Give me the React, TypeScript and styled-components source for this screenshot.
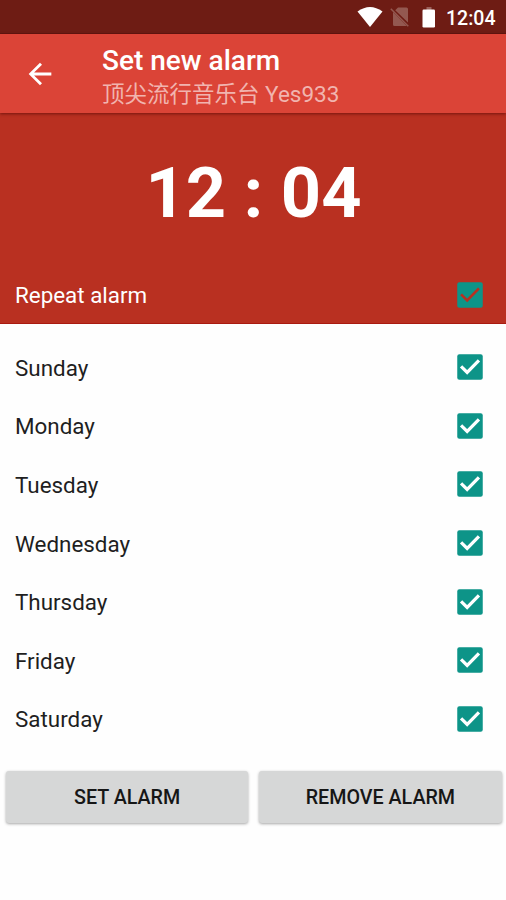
import React, { useState } from "react";
import styled, { createGlobalStyle } from "styled-components";

const GlobalStyle = createGlobalStyle`
  * { box-sizing: border-box; }
  body {
    margin: 0;
    background: #fefefe;
    font-family: Roboto, "Noto Sans CJK SC", sans-serif;
  }
`;

const Screen = styled.div`
  width: 506px;
  height: 900px;
  display: flex;
  flex-direction: column;
  overflow: hidden;
`;

const StatusBar = styled.div`
  flex: none;
  height: 34px;
  display: flex;
  align-items: center;
  justify-content: flex-end;
  padding-right: 10px;
  background: #6e1c14;
  border-bottom: 1px solid #611610;
  color: #fff;
`;

const Clock = styled.span`
  width: 50px;
  margin-left: 10px;
  padding-top: 3px;
  font-size: 19.5px;
  line-height: 23px;
  font-weight: 500;
  white-space: nowrap;
`;

const StatusIcon = styled.svg<{ $gap?: number }>`
  display: block;
  flex: none;
  margin-right: ${(p) => p.$gap ?? 0}px;
`;

const Toolbar = styled.header`
  flex: none;
  height: 79px;
  display: flex;
  align-items: center;
  padding-left: 23px;
  background: #db4437;
  box-shadow: 0 1px 3px rgba(70, 0, 0, 0.6);
  z-index: 1;
`;

const BackButton = styled.button`
  width: 34px;
  height: 34px;
  padding: 0;
  margin-right: 45px;
  border: 0;
  background: none;
  color: #fff;

  svg { display: block; }
`;

const Titles = styled.div`
  display: flex;
  flex-direction: column;
  padding-top: 7px;
  white-space: nowrap;
`;

const Title = styled.h1`
  margin: 0;
  color: #fff;
  font-size: 28px;
  line-height: 33px;
  font-weight: 500;
`;

const Subtitle = styled.div`
  color: #f1b4af;
  font-size: 22.5px;
  line-height: 34px;
`;

const TimePanel = styled.section`
  flex: none;
  height: 211px;
  display: flex;
  flex-direction: column;
  background: #b93021;
  color: #fff;
  border-bottom: 1px solid #a91a10;
`;

const Time = styled.div`
  height: 153px;
  padding-left: 1px;
  text-align: center;
  font-size: 70.3px;
  line-height: 160px;
  font-weight: 700;
  white-space: pre;
`;

const Row = styled.label`
  flex: none;
  height: 58.6px;
  display: flex;
  align-items: center;
  justify-content: space-between;
  padding: 0 19px 0 15px;
`;

const RowText = styled.span<{ $lift?: boolean }>`
  padding-top: ${(p) => (p.$lift ? 0 : 2)}px;
  font-size: 22.4px;
  line-height: 27px;
`;

const HiddenInput = styled.input`
  appearance: none;
  width: 0;
  height: 0;
  margin: 0;
`;

const CheckSlot = styled.span`
  display: flex;
`;

const Days = styled.main`
  flex: none;
  display: flex;
  flex-direction: column;
  padding-top: 14px;
  color: #1f1f1f;
`;

const Actions = styled.footer`
  display: flex;
  gap: 11px;
  padding: 22.8px 4.5px 0 6px;
`;

const Action = styled.button`
  flex: 1;
  height: 52px;
  padding: 1px 0 0;
  border: 0;
  border-radius: 3px;
  background: #d6d7d7;
  box-shadow: 0 1px 3px rgba(0, 0, 0, 0.35);
  color: #161616;
  font-family: inherit;
  font-size: 19.7px;
  font-weight: 500;
`;

function CheckBox({ label, mark, thin }: { label: string; mark: string; thin?: boolean }) {
  const [checked, setChecked] = useState(true);
  return (
    <CheckSlot>
      <HiddenInput
        type="checkbox"
        aria-label={label}
        checked={checked}
        onChange={() => setChecked(!checked)}
      />
      <svg width="34" height="34" viewBox="0 0 24 24">
        <rect x="3" y="3" width="18" height="18" rx="1.5" fill={checked ? "#0d9488" : "#757575"} />
        {checked && (
          <path
            d="M5.7 11.5l4.3 4.3 8.3-8.5"
            fill="none"
            stroke={mark}
            strokeWidth={thin ? 1.8 : 2.3}
          />
        )}
      </svg>
    </CheckSlot>
  );
}

const days = ["Sunday", "Monday", "Tuesday", "Wednesday", "Thursday", "Friday", "Saturday"];

export default function App() {
  return (
    <>
      <GlobalStyle />
      <Screen>
        <StatusBar>
          <StatusIcon $gap={7} width="26" height="20" viewBox="0 0 26 20">
            <path d="M0.5 4.5Q13-4.5 25.5 4.5L13 20Z" fill="#fff" />
          </StatusIcon>
          <StatusIcon $gap={12} width="20" height="20" viewBox="0 0 20 20">
            <path
              d="M8 .5h8.5Q18 .5 18 2v13.5L5.2 3.2ZM3 5L16.8 19H4.5Q3 19 3 17.5Z"
              fill="#935850"
            />
            <path d="M.8 1.8L18.3 19.2" stroke="#935850" strokeWidth="1.5" />
          </StatusIcon>
          <StatusIcon width="14" height="22" viewBox="0 0 14 22">
            <path d="M4.5 1h5v3h-5z" fill="#9b605a" />
            <rect x=".5" y="3.5" width="12.5" height="18" rx="1.2" fill="#fff" />
          </StatusIcon>
          <Clock>12:04</Clock>
        </StatusBar>
        <Toolbar>
          <BackButton aria-label="Back">
            <svg width="34" height="34" viewBox="0 0 24 24">
              <path
                d="M20 11H7.83l5.59-5.59L12 4l-8 8 8 8 1.41-1.41L7.83 13H20v-2z"
                fill="currentColor"
              />
            </svg>
          </BackButton>
          <Titles>
            <Title>Set new alarm</Title>
            <Subtitle>顶尖流行音乐台 Yes933</Subtitle>
          </Titles>
        </Toolbar>
        <TimePanel>
          <Time>12 : 04</Time>
          <Row>
            <RowText $lift>Repeat alarm</RowText>
            <CheckBox label="Repeat alarm" mark="#b93021" thin />
          </Row>
        </TimePanel>
        <Days>
          {days.map((day) => (
            <Row key={day}>
              <RowText>{day}</RowText>
              <CheckBox label={day} mark="#fff" />
            </Row>
          ))}
        </Days>
        <Actions>
          <Action>SET ALARM</Action>
          <Action>REMOVE ALARM</Action>
        </Actions>
      </Screen>
    </>
  );
}
